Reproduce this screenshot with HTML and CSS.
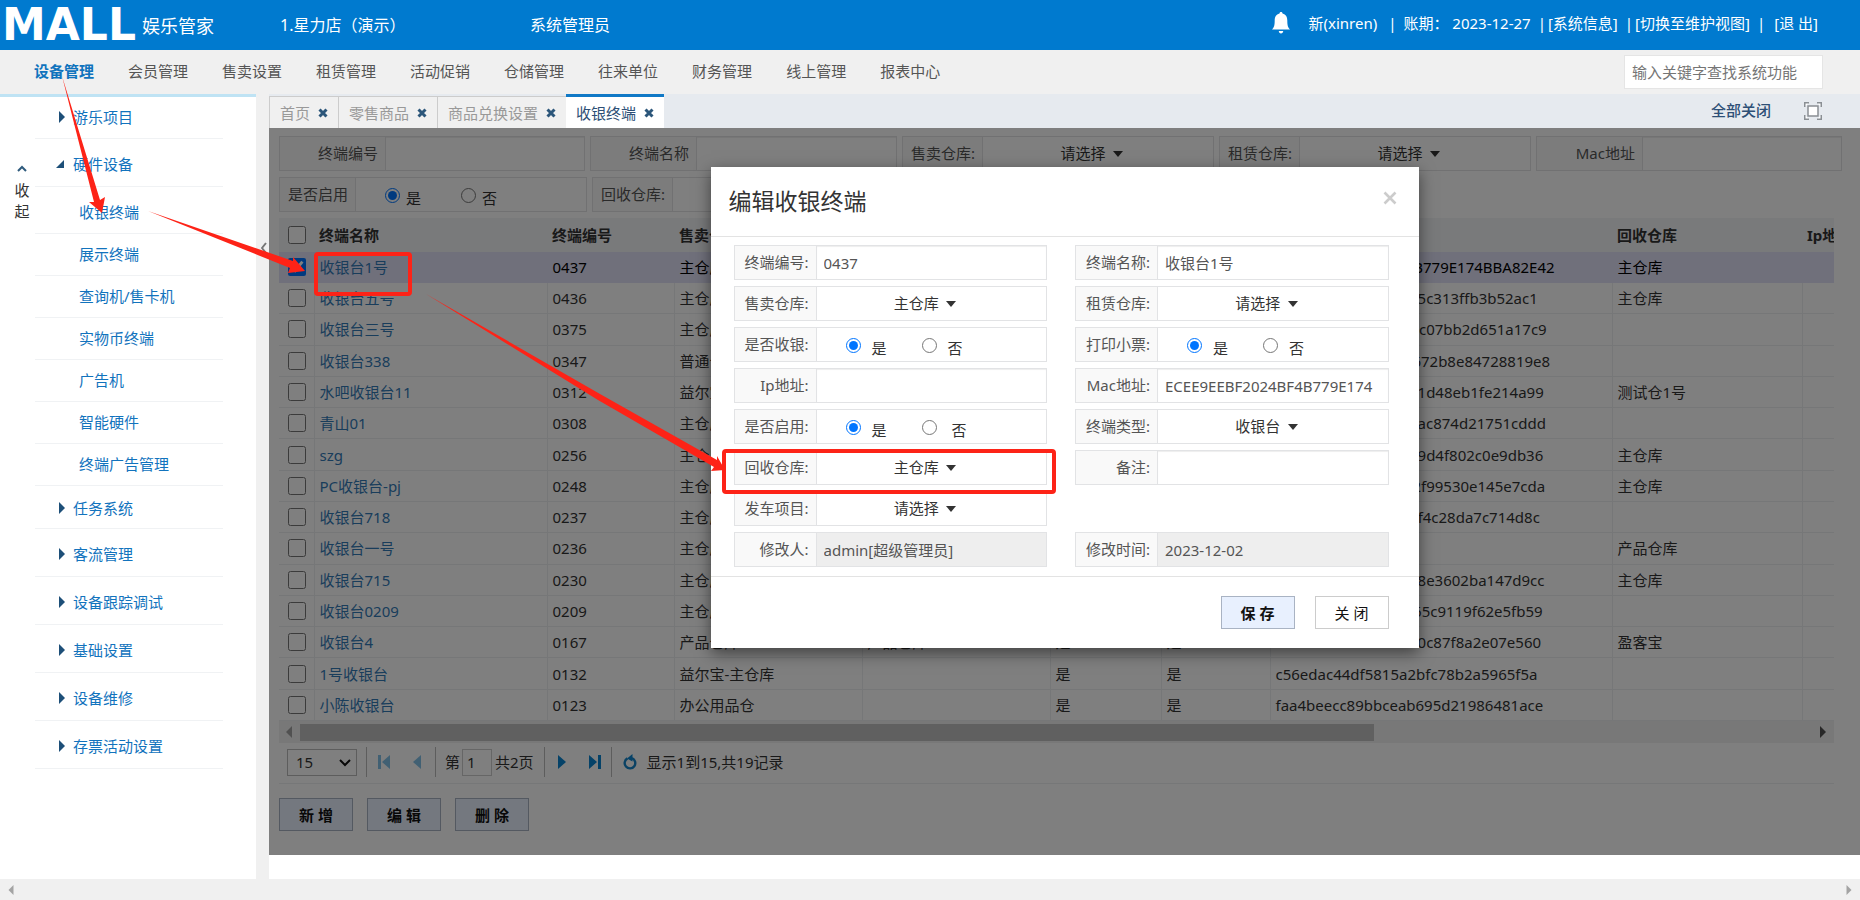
FILE: index.html
```html
<!DOCTYPE html>
<html lang="zh-CN">
<head>
<meta charset="utf-8">
<title>娱乐管家</title>
<link rel="stylesheet" href="styles.css">
</head>
<body>
<svg class="defs" width="0" height="0" aria-hidden="true">
  <symbol id="x" viewBox="0 0 10 10"><path d="M1.5 1.5l7 7M8.5 1.5l-7 7" stroke="currentColor" stroke-width="3"/></symbol>
  <symbol id="caret" viewBox="0 0 10 6"><path d="M0 0h10L5 6z" fill="currentColor"/></symbol>
  <symbol id="right" viewBox="0 0 6 12"><path d="M0 0l6 6-6 6z" fill="currentColor"/></symbol>
  <symbol id="left" viewBox="0 0 6 12"><path d="M6 0L0 6l6 6z" fill="currentColor"/></symbol>
</svg>

<header class="top">
  <span class="logo">MALL</span>
  <span class="brand">娱乐管家</span>
  <span class="store">1.星力店（演示）</span>
  <span class="role">系统管理员</span>
  <div class="account">
    <svg class="bell" viewBox="0 0 18 22" aria-hidden="true"><path fill="#fff" d="M9 0c1 0 1.500.7 1.500 1.600C14 2.500 15.300 5 15.300 8.500c0 5 .7 7 2.700 9H0c2-2 2.700-4 2.700-9C2.700 5 4 2.500 7.500 1.600 7.500.7 8 0 9 0zM6.800 19h4.400c0 1.500-1 2.500-2.200 2.500S6.800 20.500 6.800 19z"/></svg>
    <span>新(xinren)</span><i class="wide">|</i><span class="period">账期：&nbsp;2023-12-27</span><i>|</i><a href="#">[系统信息]</a><i>|</i><a href="#">[切换至维护视图]</a><i>|</i><a href="#" class="exit">[退 出]</a>
  </div>
</header>

<nav class="nav">
  <a href="#" class="on">设备管理</a><a href="#">会员管理</a><a href="#">售卖设置</a><a href="#">租赁管理</a><a href="#">活动促销</a><a href="#">仓储管理</a><a href="#">往来单位</a><a href="#">财务管理</a><a href="#">线上管理</a><a href="#">报表中心</a>
  <input class="search" type="text" placeholder="输入关键字查找系统功能" aria-label="输入关键字查找系统功能">
</nav>

<div class="body">
  <aside class="side">
    <button class="fold" type="button"><svg viewBox="0 0 10 7"><path d="M1 6l4-4 4 4" fill="none" stroke="#2f5b7d" stroke-width="2"/></svg><span>收</span><span>起</span></button>
    <ul class="menu">
      <li><a href="#"><svg><use href="#right"/></svg>游乐项目</a></li>
      <li class="open"><a href="#"><svg viewBox="0 0 8 8"><path d="M8 0v8H0z" fill="currentColor"/></svg>硬件设备</a>
        <ul class="sub">
          <li><a href="#">收银终端</a></li>
          <li><a href="#">展示终端</a></li>
          <li><a href="#">查询机/售卡机</a></li>
          <li><a href="#">实物币终端</a></li>
          <li><a href="#">广告机</a></li>
          <li><a href="#">智能硬件</a></li>
          <li><a href="#">终端广告管理</a></li>
        </ul>
      </li>
      <li><a href="#"><svg><use href="#right"/></svg>任务系统</a></li>
      <li><a href="#"><svg><use href="#right"/></svg>客流管理</a></li>
      <li><a href="#"><svg><use href="#right"/></svg>设备跟踪调试</a></li>
      <li><a href="#"><svg><use href="#right"/></svg>基础设置</a></li>
      <li><a href="#"><svg><use href="#right"/></svg>设备维修</a></li>
      <li><a href="#"><svg><use href="#right"/></svg>存票活动设置</a></li>
    </ul>
  </aside>
  <div class="split"><svg viewBox="0 0 6 12"><path d="M5 1L1 6l4 5" fill="none" stroke="#777" stroke-width="2"/></svg></div>

  <main class="main">
    <div class="tabs">
      <a href="#" class="tab">首页<svg><use href="#x"/></svg></a>
      <a href="#" class="tab">零售商品<svg><use href="#x"/></svg></a>
      <a href="#" class="tab">商品兑换设置<svg><use href="#x"/></svg></a>
      <a href="#" class="tab on">收银终端<svg><use href="#x"/></svg></a>
      <a href="#" class="closeall">全部关闭</a>
      <button class="full" type="button" aria-label="全屏"><svg viewBox="0 0 18 18"><path d="M.75 5V.75H5M13 .75h4.250V5M17.250 13v4.250H13M5 17.250H.75V13M4 4h10v10H4z" fill="#fff" stroke="#8a8f94" stroke-width="1.500"/></svg></button>
    </div>

    <section class="stage">
      <form class="filters">
        <div class="row row1">
          <div class="group w106"><label for="f1">终端编号</label><input id="f1" type="text"></div>
          <div class="group w106"><label for="f2">终端名称</label><input id="f2" type="text"></div>
          <div class="group w80"><label for="f3">售卖仓库:</label><div class="pick"><select id="f3"><option>请选择</option></select><svg><use href="#caret"/></svg></div></div>
          <div class="group w80"><label for="f4">租赁仓库:</label><div class="pick"><select id="f4"><option>请选择</option></select><svg><use href="#caret"/></svg></div></div>
          <div class="group w106"><label for="f5">Mac地址</label><input id="f5" type="text"></div>
        </div>
        <div class="row row2">
          <div class="group w76"><span class="lab">是否启用</span><div class="radios tight"><label><input type="radio" name="fen" checked>是</label><label><input type="radio" name="fen">否</label></div></div>
          <div class="group w80"><label for="f6">回收仓库:</label><div class="pick"><select id="f6"><option>请选择</option></select><svg><use href="#caret"/></svg></div></div>
        </div>
      </form>

      <div class="gridbox">
        <table class="grid">
          <colgroup><col class="c0"><col class="c1"><col class="c2"><col class="c3"><col class="c3"><col class="c5"><col class="c6"><col class="c7"><col class="c8"><col class="c9"></colgroup>
          <thead><tr><th><input type="checkbox" aria-label="全选"></th><th>终端名称</th><th>终端编号</th><th>售卖仓库</th><th>租赁仓库</th><th>是否收银</th><th>打印小票</th><th>Mac地址</th><th>回收仓库</th><th>Ip地址</th></tr></thead>
          <tbody>
            <tr class="sel"><td><input type="checkbox" checked aria-label="收银台1号"></td><td><a href="#">收银台1号</a></td><td>0437</td><td>主仓库</td><td></td><td>是</td><td>是</td><td>ECEE9EEBF2024BF4B779E174BBA82E42</td><td>主仓库</td><td></td></tr>
            <tr><td><input type="checkbox" aria-label="收银台五号"></td><td><a href="#">收银台五号</a></td><td>0436</td><td>主仓库</td><td></td><td>是</td><td>是</td><td>a1b04c7d92e8f03665c313ffb3b52ac1</td><td>主仓库</td><td></td></tr>
            <tr><td><input type="checkbox" aria-label="收银台三号"></td><td><a href="#">收银台三号</a></td><td>0375</td><td>主仓库</td><td></td><td>是</td><td>是</td><td>3e90b7145ad26f850c07bb2d651a17c9</td><td></td><td></td></tr>
            <tr><td><input type="checkbox" aria-label="收银台338"></td><td><a href="#">收银台338</a></td><td>0347</td><td>普通仓库</td><td></td><td>是</td><td>是</td><td>7bd05e1946c3a802672b8e84728819e8</td><td></td><td></td></tr>
            <tr><td><input type="checkbox" aria-label="水吧收银台11"></td><td><a href="#">水吧收银台11</a></td><td>0312</td><td>益尔宝-主仓库</td><td></td><td>是</td><td>是</td><td>91c4e07a3b5d2f6871d48eb1fe214a99</td><td>测试仓1号</td><td></td></tr>
            <tr><td><input type="checkbox" aria-label="青山01"></td><td><a href="#">青山01</a></td><td>0308</td><td>主仓库</td><td></td><td>是</td><td>是</td><td>5f20d8c6b1e94a730ac874d21751cddd</td><td></td><td></td></tr>
            <tr><td><input type="checkbox" aria-label="szg"></td><td><a href="#">szg</a></td><td>0256</td><td>主仓库</td><td></td><td>是</td><td>是</td><td>c8173e5b60fa2d4719d4f802c0e9db36</td><td>主仓库</td><td></td></tr>
            <tr><td><input type="checkbox" aria-label="PC收银台-pj"></td><td><a href="#">PC收银台-pj</a></td><td>0248</td><td>主仓库</td><td></td><td>是</td><td>是</td><td>06b9d2e5178ca3402f99530e145e7cda</td><td>主仓库</td><td></td></tr>
            <tr><td><input type="checkbox" aria-label="收银台718"></td><td><a href="#">收银台718</a></td><td>0237</td><td>主仓库</td><td></td><td>是</td><td>是</td><td>b47e1093d5c86a20ff4c28da7c714d8c</td><td></td><td></td></tr>
            <tr><td><input type="checkbox" aria-label="收银台一号"></td><td><a href="#">收银台一号</a></td><td>0236</td><td>主仓库</td><td></td><td>是</td><td>是</td><td></td><td>产品仓库</td><td></td></tr>
            <tr><td><input type="checkbox" aria-label="收银台715"></td><td><a href="#">收银台715</a></td><td>0230</td><td>主仓库</td><td></td><td>是</td><td>是</td><td>2d6a90c1e7b4538f28e3602ba147d9cc</td><td>主仓库</td><td></td></tr>
            <tr><td><input type="checkbox" aria-label="收银台0209"></td><td><a href="#">收银台0209</a></td><td>0209</td><td>主仓库</td><td></td><td>是</td><td>是</td><td>e03b75d9a1642c8b65c9119f62e5fb59</td><td></td><td></td></tr>
            <tr><td><input type="checkbox" aria-label="收银台4"></td><td><a href="#">收银台4</a></td><td>0167</td><td>产品仓库</td><td>产品仓库</td><td>是</td><td>是</td><td>4a8c1f60e2d7b93500c87f8a2e07e560</td><td>盈客宝</td><td></td></tr>
            <tr><td><input type="checkbox" aria-label="1号收银台"></td><td><a href="#">1号收银台</a></td><td>0132</td><td>益尔宝-主仓库</td><td></td><td>是</td><td>是</td><td>c56edac44df5815a2bfc78b2a5965f5a</td><td></td><td></td></tr>
            <tr><td><input type="checkbox" aria-label="小陈收银台"></td><td><a href="#">小陈收银台</a></td><td>0123</td><td>办公用品仓</td><td></td><td>是</td><td>是</td><td>faa4beecc89bbceab695d21986481ace</td><td></td><td></td></tr>
          </tbody>
        </table>
        <div class="hscroll"><svg class="dim"><use href="#left"/></svg><div class="track"><div class="thumb"></div></div><svg><use href="#right"/></svg></div>
        <div class="pager">
          <span class="size"><select aria-label="每页条数"><option>15</option></select><svg viewBox="0 0 12 8"><path d="M1 1l5 5 5-5" fill="none" stroke="#111" stroke-width="2"/></svg></span>
          <i></i>
          <button type="button" class="pale" aria-label="首页"><svg viewBox="0 0 12 14"><path d="M0 0h3v14H0zM12 0v14L4 7z"/></svg></button>
          <button type="button" class="pale" aria-label="上一页"><svg viewBox="0 0 12 14"><path d="M10 0v14L2 7z"/></svg></button>
          <i></i>
          <label class="page">第<input type="text" value="1"></label><span class="total">共2页</span>
          <i></i>
          <button type="button" aria-label="下一页"><svg viewBox="0 0 12 14"><path d="M2 0v14l8-7z"/></svg></button>
          <button type="button" aria-label="末页"><svg viewBox="0 0 12 14"><path d="M9 0h3v14H9zM0 0v14l8-7z"/></svg></button>
          <i></i>
          <button type="button" class="re" aria-label="刷新"><svg viewBox="0 0 14 16"><path d="M9 4.200A5.300 5.300 0 1 1 4.500 4.400" fill="none" stroke="#1684c8" stroke-width="2.400"/><path d="M4 4.500L9.500 0v7.500z"/></svg></button>
          <span>显示1到15,共19记录</span>
        </div>
      </div>
      <div class="actions"><button type="button" class="btn">新 增</button><button type="button" class="btn">编 辑</button><button type="button" class="btn">删 除</button></div>

      <div class="mask">
        <form class="modal" role="dialog" aria-labelledby="mt">
          <div class="mhead"><h2 id="mt">编辑收银终端</h2><button type="button" class="mclose" aria-label="关闭"><svg viewBox="0 0 14 14"><path d="M1.500 1.500l11 11M12.500 1.500l-11 11" stroke="#ccc" stroke-width="2.600"/></svg></button></div>
          <div class="fields">
            <div class="group"><label for="m1">终端编号:</label><input id="m1" type="text" value="0437"></div>
            <div class="group"><label for="m2">终端名称:</label><input id="m2" type="text" value="收银台1号"></div>
            <div class="group"><label for="m3">售卖仓库:</label><div class="pick"><select id="m3"><option>主仓库</option></select><svg><use href="#caret"/></svg></div></div>
            <div class="group"><label for="m4">租赁仓库:</label><div class="pick"><select id="m4"><option>请选择</option></select><svg><use href="#caret"/></svg></div></div>
            <div class="group"><span class="lab">是否收银:</span><div class="radios"><label><input type="radio" name="m5" checked>是</label><label><input type="radio" name="m5">否</label></div></div>
            <div class="group"><span class="lab">打印小票:</span><div class="radios"><label><input type="radio" name="m6" checked>是</label><label><input type="radio" name="m6">否</label></div></div>
            <div class="group"><label for="m7">Ip地址:</label><input id="m7" type="text"></div>
            <div class="group"><label for="m8">Mac地址:</label><input id="m8" type="text" value="ECEE9EEBF2024BF4B779E174"></div>
            <div class="group"><span class="lab">是否启用:</span><div class="radios"><label><input type="radio" name="m9" checked>是</label><label><input type="radio" name="m9">&nbsp;否</label></div></div>
            <div class="group"><label for="m10">终端类型:</label><div class="pick"><select id="m10"><option>收银台</option></select><svg><use href="#caret"/></svg></div></div>
            <div class="group"><label for="m11">回收仓库:</label><div class="pick"><select id="m11"><option>主仓库</option></select><svg><use href="#caret"/></svg></div></div>
            <div class="group"><label for="m12">备注:</label><input id="m12" type="text"></div>
            <div class="group first"><label for="m13">发车项目:</label><div class="pick"><select id="m13"><option>请选择</option></select><svg><use href="#caret"/></svg></div></div>
            <div class="group first"><label for="m14">修改人:</label><input id="m14" type="text" value="admin[超级管理员]" disabled></div>
            <div class="group"><label for="m15">修改时间:</label><input id="m15" type="text" value="2023-12-02" disabled></div>
          </div>
          <div class="mfoot"><button type="button" class="btn">保 存</button><button type="button" class="btn plain">关 闭</button></div>
        </form>
      </div>
    </section>
  </main>
</div>

<div class="pagescroll"><svg><use href="#left"/></svg><svg><use href="#right"/></svg></div>

<svg class="marks" width="1860" height="900" viewBox="0 0 1860 900" aria-hidden="true">
  <g fill="#fd2317">
    <path d="M62 76L100 200 105 197 102 213 89 202 94 202z"/>
    <path d="M148 211L293 261 293 257 305 271 288 273 290 268z"/>
    <path d="M426 294L600 394 717 460 717 456 725 470 711 471 714 467 598 400z"/>
  </g>
  <g fill="none" stroke="#fd2317" stroke-width="4">
    <rect x="316" y="254" width="94" height="40" rx="2"/>
    <rect x="724" y="451" width="330" height="41" rx="2"/>
  </g>
</svg>
</body>
</html>
```

FILE: styles.css
```css
* { box-sizing: border-box; }
body {
  margin: 0;
  min-height: 100vh;
  display: flex;
  flex-direction: column;
  position: relative;
  overflow: hidden;
  background: #f0f0f0;
  color: #333;
  font: 15px/20px "Noto Sans", "Noto Sans CJK SC", sans-serif;
}
a { color: inherit; text-decoration: none; }
i { font-style: normal; }
ul { margin: 0; padding: 0; list-style: none; }
button, input, select { font: inherit; color: inherit; }
button { border: 0; padding: 0; background: none; }
svg { flex: none; display: block; }
.defs { position: absolute; }

/* top bar */
.top {
  height: 50px;
  display: flex;
  align-items: center;
  background: #007acf;
  color: #fff;
  font-size: 16px;
  white-space: nowrap;
}
.logo { width: 138px; padding-left: 2px; font: bold 44px/50px "DejaVu Sans", sans-serif; }
.brand { width: 142px; padding: 2px 0 0 4px; font-size: 18px; }
.store { width: 250px; }
.role { flex: 1; }
.account { display: flex; align-items: center; padding: 0 42px 4px 0; font-size: 15px; }
.account .bell { width: 18px; height: 22px; margin-right: 19px; }
.account i { padding: 0 2px 0 7px; }
.account .wide { padding: 0 7px 0 11px; }
.account .exit { padding-left: 7px; }

/* main navigation */
.nav {
  height: 44px;
  display: flex;
  align-items: center;
  gap: 34px;
  padding: 0 37px 0 34px;
  color: #555;
}
.nav a { padding-bottom: 2px; white-space: nowrap; }
.nav .on { color: #0f73bd; font-weight: bold; }
.search {
  width: 199px;
  height: 34px;
  margin-left: auto;
  padding: 0 7px;
  border: 1px solid #e5e5e5;
  background: #fff;
}
.search::placeholder { color: #757575; }

/* side menu */
.body { flex: 1; display: flex; }
.side {
  width: 256px;
  display: flex;
  align-items: flex-start;
  border-top: 3px solid #bfe3f4;
  background: #fff;
}
.fold { width: 35px; padding: 68px 0 0 9px; display: flex; flex-direction: column; align-items: center; }
.fold svg { width: 10px; height: 7px; margin-bottom: 8px; }
.fold span { line-height: 21px; }
.menu { width: 188px; color: #1273bd; }
.menu a {
  height: 48px;
  display: flex;
  align-items: center;
  padding: 3px 0 0 38px;
  border-bottom: 1px solid #f0f2f4;
}
.menu > li:first-child a { height: 42px; padding: 0 0 2px 38px; }
.menu a svg { width: 6px; height: 12px; margin-right: 8px; margin-left: -14px; color: #1d4f78; }
.menu .open > a svg { width: 8px; height: 8px; margin-left: -17px; margin-right: 9px; }
.menu .sub { padding: 5px 0 1px; }
.menu .sub a { height: 42px; padding: 0 0 2px 44px; }
.open + li > a { height: 42px; padding-top: 0; }
.split { width: 13px; padding: 148px 0 0 5px; }
.split svg { width: 6px; height: 12px; }

/* tabs */
.main { flex: 1; min-width: 0; background: #fff; }
.tabs {
  height: 34px;
  display: flex;
  align-items: flex-end;
  padding-right: 38px;
  background: #e6eaef;
}
.tab {
  height: 32px;
  display: flex;
  align-items: center;
  gap: 8px;
  padding: 0 10px;
  border: 1px solid #ccc;
  border-width: 1px 0 0 1px;
  background: #f0f0f0;
  color: #999;
}
.tab svg { width: 10px; height: 10px; color: #2c567a; }
.tab.on { height: 34px; border-width: 3px 0 0; border-color: #1079c6; background: #fff; color: #2d4f76; }
.closeall { margin-left: auto; align-self: center; padding-bottom: 2px; color: #2d4f76; font-weight: 500; }
.full { margin: 0 0 0 33px; align-self: center; }
.full svg { width: 18px; height: 18px; }

/* stage: filters, grid, buttons */
.stage { position: relative; padding: 8px 18px 24px 10px; }
.row { display: grid; gap: 5px; margin-bottom: 6px; }
.row1 { grid-template-columns: 306fr 307fr 312fr 312fr 306fr; }
.row2 { grid-template-columns: 308px 312px; }
.group { display: flex; min-width: 0; height: 35px; border: 1px solid #e2e3e5; background: #fff; }
.group > label, .group > .lab {
  width: 82px;
  flex: none;
  padding: 0 7px 0 0;
  border-right: 1px solid #e2e3e5;
  background: #f9f9f9;
  color: #555;
  line-height: 32px;
  text-align: right;
}
.w106 > label { width: 106px; }
.w80 > label { width: 80px; }
.w76 > .lab { width: 76px; }
.group > input {
  flex: 1;
  min-width: 0;
  padding: 0 7px;
  border: 0;
  background: #fff;
  color: #555;
  box-shadow: inset 0 1px 1px #eee;
}
.group > input:disabled { background: #eee; }
.pick { flex: 1; min-width: 0; position: relative; }
.pick select {
  width: 100%;
  height: 100%;
  padding: 0 30px 2px 0;
  border: 0;
  appearance: none;
  background: transparent;
  text-align: center;
  text-align-last: center;
}
.pick svg { position: absolute; left: calc(50% + 15px); top: 14px; width: 10px; height: 6px; pointer-events: none; }
.radios { flex: 1; display: flex; align-items: center; padding: 5px 0 0 29px; }
.radios label { width: 76px; display: flex; align-items: flex-end; gap: 11px; line-height: 17px; white-space: nowrap; }
.radios input { width: 15px; height: 15px; margin: 0 0 4px; accent-color: #0075ff; }
.radios.tight label { gap: 6px; }

.gridbox { margin-right: 8px; overflow: hidden; }
.grid { width: 1700px; height: 503px; table-layout: fixed; border-collapse: collapse; }
.c0 { width: 35px; } .c1 { width: 233px; } .c2 { width: 127px; } .c3 { width: 188px; }
.c5 { width: 111px; } .c6 { width: 109px; } .c7 { width: 342px; } .c8 { width: 190px; } .c9 { width: 177px; }
.grid th { height: 34px; padding: 0 5px; background: #f2f4f7; text-align: left; white-space: nowrap; }
.grid td { padding: 0 5px; border: 1px solid #eceef0; border-width: 0 1px 1px 0; white-space: nowrap; }
.grid a { color: #337ab7; }
.grid input { display: block; width: 18px; height: 18px; margin: 0 0 0 4px; }
.grid .sel td { background: #e0e0f6; border-color: #e0e0f6; color: #000; }
.hscroll { height: 22px; display: flex; align-items: center; padding: 0 8px 0 7px; gap: 8px; background: #f1f1f1; color: #505050; }
.hscroll svg { width: 6px; height: 12px; }
.hscroll .dim { color: #a3a3a3; }
.track { flex: 1; }
.thumb { width: 71%; height: 17px; background: #c1c1c1; }
.pager { height: 41px; display: flex; align-items: center; padding: 0 0 2px 8px; border-bottom: 1px solid #eceef0; white-space: nowrap; }
.pager > i { width: 1px; height: 30px; background: #bbb; }
.size { position: relative; margin-right: 9px; }
.size select { display: block; width: 70px; height: 27px; padding: 0 8px; border: 1px solid #bbb; appearance: none; background: #fff; }
.size svg { position: absolute; right: 6px; top: 10px; width: 12px; height: 8px; pointer-events: none; }
.pager button { width: 32px; margin-left: 1px; display: flex; justify-content: center; }
.pager .pale { opacity: .5; }
.pager .pale + i { margin-left: 2px; }
.pager button svg { width: 12px; height: 14px; fill: #0a84d0; }
.pager .re { margin: 0 1px 0 2px; }
.pager .re svg { width: 14px; height: 16px; }
.page { display: flex; align-items: center; gap: 2px; margin-left: 9px; }
.page input { width: 30px; height: 27px; padding: 0 4px; border: 1px solid #ccc; }
.total { margin: 0 10px 0 3px; }
.actions { display: flex; gap: 14px; margin-top: 14px; }
.btn { width: 74px; height: 33px; border: 1px solid #a9b3c3; background: #e8f0fe; color: #111; font-weight: bold; }
.btn.plain { border-color: #ccc; background: #fff; font-weight: normal; }

/* dialog over the stage */
.mask { position: absolute; inset: 0; padding-top: 39px; background: rgba(0, 0, 0, .5); }
.modal { width: 708px; margin: 0 auto; background: #fff; box-shadow: 0 5px 15px rgba(0, 0, 0, .5); }
.mhead { height: 70px; display: flex; justify-content: space-between; padding: 0 22px 0 18px; border-bottom: 1px solid #e3e3e3; }
.mhead h2 { margin: 0; font-size: 23px; line-height: 68px; font-weight: normal; }
.mclose svg { width: 14px; height: 14px; margin-bottom: 8px; }
.fields { display: grid; grid-template-columns: 1fr 1fr; gap: 6px 28px; padding: 8px 30px 9px 23px; border-bottom: 1px solid #e3e3e3; }
.first { grid-column: 1; }
.mfoot { display: flex; justify-content: flex-end; gap: 20px; padding: 19px 30px 19px; }

.pagescroll { height: 21px; display: flex; align-items: center; justify-content: space-between; padding: 0 8px; background: #f0f0f0; color: #a3a3a3; }
.pagescroll svg { width: 6px; height: 10px; }
.marks { position: absolute; left: 0; top: 0; pointer-events: none; }
```
